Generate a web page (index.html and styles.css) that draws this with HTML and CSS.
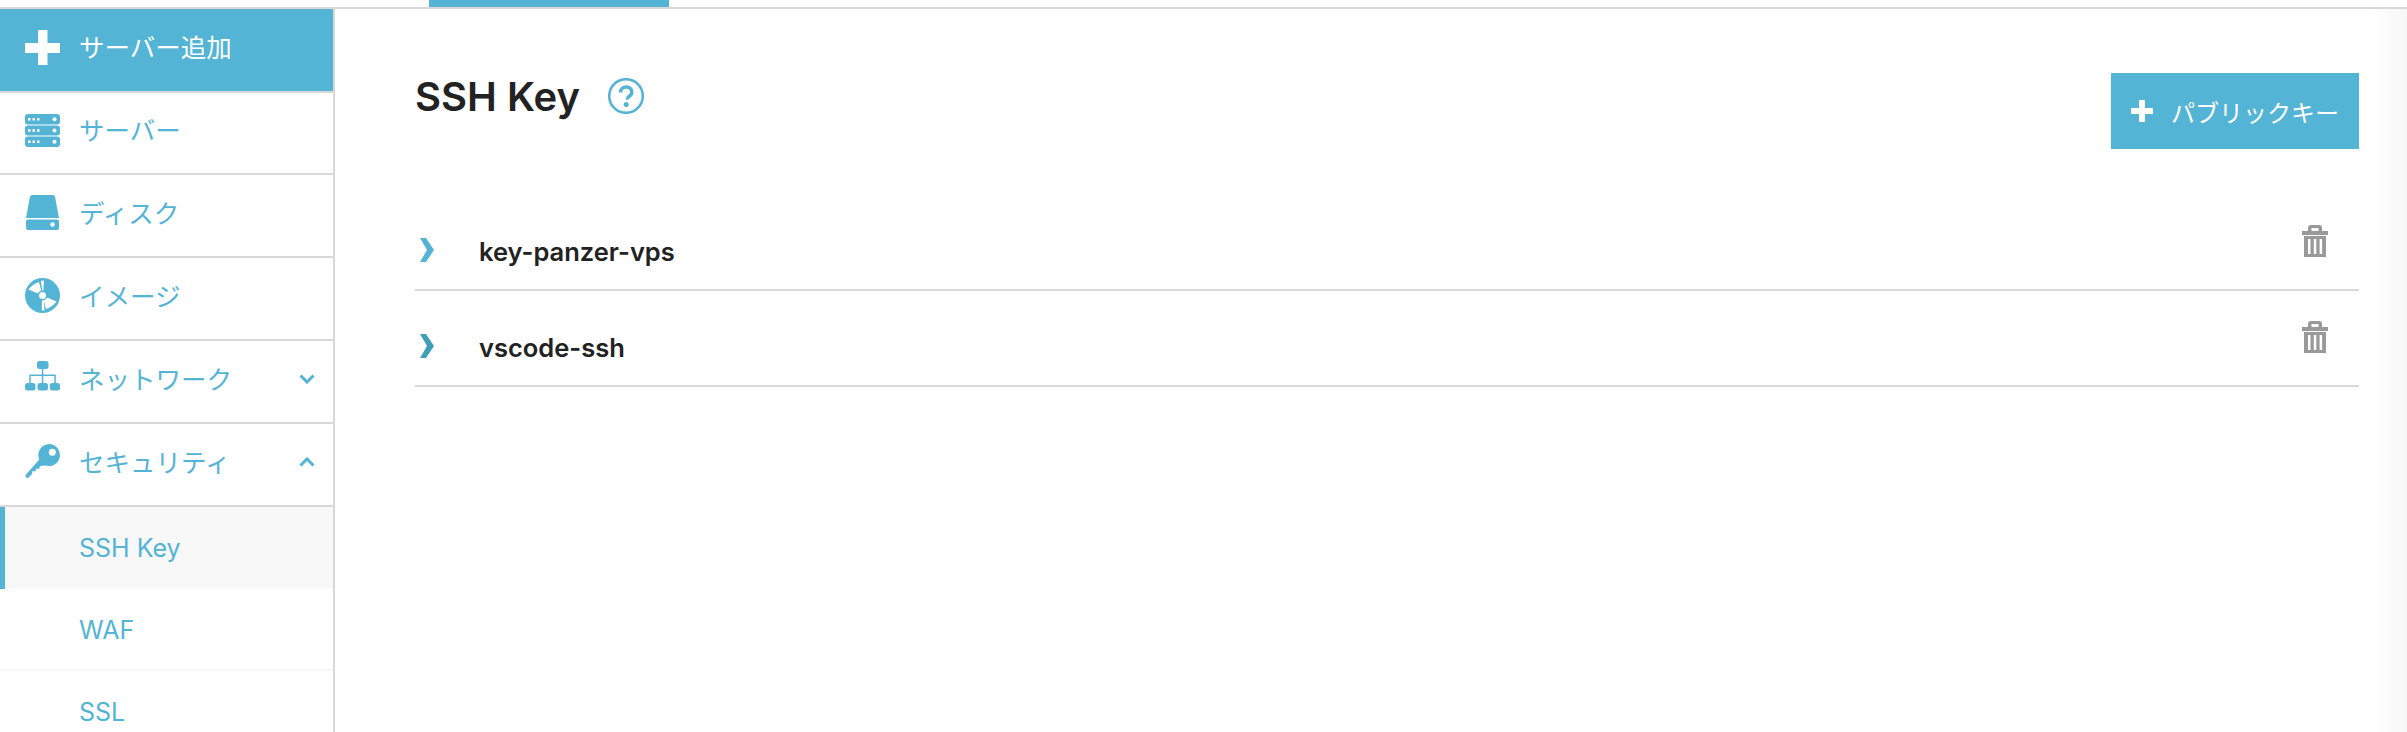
FILE: index.html
```html
<!DOCTYPE html>
<html lang="ja">
<head>
    <meta charset="UTF-8">
    <meta name="viewport" content="width=device-width, initial-scale=1.0">
    <title>SSH Key</title>
    <link rel="stylesheet" href="styles.css">
</head>
<body>

    <div class="topbar"><div class="topbar-tab"></div></div>

    <div class="layout">
        <nav class="sidebar">
            <a class="nav-item nav-add">
                <svg class="nav-icon" viewBox="0 0 35 35"><path d="M13 0h9.500v13H35v10H22.500v12H13V23H0V13h13z" fill="#fff"/></svg>
                <span>サーバー追加</span>
            </a>
            <a class="nav-item nav-server">
                <svg class="nav-icon" viewBox="0 0 35 35">
                    <rect y="1" width="35" height="10.500" rx="3"/>
                    <rect y="12.500" width="35" height="10" rx="3"/>
                    <rect y="23.500" width="35" height="10.500" rx="3"/>
                    <g fill="#fff">
                        <path d="M3 5h2.500v2.500H3zM7.500 5H10v2.500H7.500zM12 5h2.500v2.500H12zM3 16.200h2.500v2.500H3zM7.500 16.200H10v2.500H7.500zM12 16.200h2.500v2.500H12zM3 27.500h2.500V30H3zM7.500 27.500H10V30H7.500zM12 27.500h2.500V30H12z"/>
                        <circle cx="29.500" cy="6.300" r="2"/>
                        <circle cx="29.500" cy="17.500" r="2"/>
                        <circle cx="29.500" cy="28.800" r="2"/>
                    </g>
                </svg>
                <span>サーバー</span>
            </a>
            <a class="nav-item">
                <svg class="nav-icon" viewBox="0 0 35 35">
                    <path d="M7.500 0h20c1.500 0 2.300.8 2.600 2.200L34 23H1L4.900 2.200C5.200.8 6 0 7.500 0z"/>
                    <path d="M3 24.500h29a2 2 0 0 1 2 2V33a2 2 0 0 1-2 2H3a2 2 0 0 1-2-2v-6.500a2 2 0 0 1 2-2z"/>
                    <circle cx="27.500" cy="29.500" r="2.200" fill="#fff"/>
                </svg>
                <span>ディスク</span>
            </a>
            <a class="nav-item">
                <svg class="nav-icon" viewBox="0 0 35 35">
                    <circle cx="17.500" cy="17.500" r="17.500"/>
                    <path d="M17.500 17.500L3.500 11.500C6 8 9.500 5.500 14 4zM15.800 2.800l3.200-.3-1 15zM17.500 17.500L31.500 23.500C29 27 25.500 29.500 21 31zM17 17.500h1.500l1 15-2.700.1z" fill="#fff"/>
                    <circle cx="17.500" cy="17.500" r="5"/>
                    <circle cx="17.500" cy="17.500" r="3.500" fill="#fff"/>
                </svg>
                <span>イメージ</span>
            </a>
            <a class="nav-item">
                <svg class="nav-icon" viewBox="0 0 35 35">
                    <rect x="12" y="0" width="11.500" height="8" rx="2.500"/>
                    <path d="M16.800 8h1.500v5.500h12.500v8.500h-1.500v-7H18.300v7h-1.500v-7H5.800v7H4.300v-8.500h12.500z"/>
                    <rect x="0" y="22" width="10.500" height="7.500" rx="2.500"/>
                    <rect x="12.500" y="22" width="10.500" height="7.500" rx="2.500"/>
                    <rect x="24.800" y="22" width="10.200" height="7.500" rx="2.500"/>
                </svg>
                <span>ネットワーク</span>
                <svg class="nav-caret" viewBox="0 0 16 10"><path d="M1.500 1.500L8 8l6.500-6.500"/></svg>
            </a>
            <a class="nav-item">
                <svg class="nav-icon" viewBox="0 0 35 35">
                    <path d="M24 0a11 11 0 1 1-3 21.600L15 22l-1 3-3-.5-.5 3-3-.5-.5 3-3.500 3.500C1.500 35-.5 32.500 1 30.500L14.300 15.500A11 11 0 0 1 24 0z"/>
                    <circle cx="27.300" cy="8.300" r="3.500" fill="#fff"/>
                </svg>
                <span>セキュリティ</span>
                <svg class="nav-caret" viewBox="0 0 16 10"><path d="M1.500 8.500L8 2l6.500 6.500"/></svg>
            </a>
            <a class="nav-sub nav-sub-active">SSH Key</a>
            <a class="nav-sub">WAF</a>
            <a class="nav-sub">SSL</a>
        </nav>

        <main class="content">
            <div class="content-head">
                <div class="title-row">
                    <h1>SSH Key</h1>
                    <svg class="help-icon" viewBox="0 0 36 36">
                        <circle cx="18" cy="18" r="16.800"/>
                        <path d="M12.500 14.500c0-3.300 2.400-5.500 5.700-5.500 3.200 0 5.600 2 5.600 5 0 2.200-1.200 3.400-2.800 4.500-1.300.9-1.700 1.500-1.700 3"/>
                        <circle class="help-dot" cx="18.200" cy="26.500" r="2.500"/>
                    </svg>
                </div>
                <button class="add-key">
                    <svg class="add-key-plus" viewBox="0 0 22 22"><path d="M8 0h6v8h8v6h-8v8H8v-8H0V8h8z" fill="#fff"/></svg>
                    パブリックキー
                </button>
            </div>

            <ul class="key-list">
                <li class="key-row">
                    <svg class="key-arrow" viewBox="0 0 14 24"><path d="M0 0h6l8 12-8 12H0l7-12z"/></svg>
                    <span class="key-name">key-panzer-vps</span>
                    <svg class="trash" viewBox="0 0 26 32"><path fill-rule="evenodd" d="M6 6V3c0-2 1-3 3-3h8c2 0 3 1 3 3v3h6v4H0V6zm3.500 0h7V3h-7zM2 11h22v21H2zm4 3v15h2.500V14zm5.800 0v15h2.500V14zm5.800 0v15h2.500V14z"/></svg>
                </li>
                <li class="key-row key-row-focus">
                    <svg class="key-arrow" viewBox="0 0 14 24"><path d="M0 0h6l8 12-8 12H0l7-12z"/></svg>
                    <span class="key-name">vscode-ssh</span>
                    <svg class="trash" viewBox="0 0 26 32"><path fill-rule="evenodd" d="M6 6V3c0-2 1-3 3-3h8c2 0 3 1 3 3v3h6v4H0V6zm3.500 0h7V3h-7zM2 11h22v21H2zm4 3v15h2.500V14zm5.800 0v15h2.500V14zm5.800 0v15h2.500V14z"/></svg>
                </li>
            </ul>
        </main>
    </div>

</body>
</html>
```

FILE: styles.css
```css
* {
    box-sizing: border-box;
}
body {
    margin: 0;
    height: 732px;
    overflow: hidden;
    background: #fff;
    font-family: Inter, "Noto Sans CJK JP", sans-serif;
    color: #222;
}
.topbar {
    height: 9px;
    border-bottom: 2px solid #d8d8d8;
    padding-left: 429px;
}
.topbar-tab {
    width: 240px;
    height: 7px;
    background: #54b4d5;
}
.layout {
    display: flex;
    height: 723px;
}
.sidebar {
    width: 335px;
    flex-shrink: 0;
    border-right: 2px solid #d8d8d8;
}
.nav-item {
    display: flex;
    align-items: center;
    gap: 19px;
    height: 83px;
    padding: 0 18px 6px 25px;
    border-bottom: 2px solid #d8d8d8;
    color: #54b4d5;
    font-size: 25.500px;
    font-weight: 400;
}
.nav-item span {
    margin-bottom: 3px;
}
.nav-add {
    height: 84px;
    background: #54b4d5;
    color: #fff;
}
.nav-server {
    height: 82px;
}
.nav-icon {
    width: 35px;
    height: 35px;
    fill: #54b4d5;
    flex-shrink: 0;
}
.nav-caret {
    width: 16px;
    height: 10px;
    margin-left: auto;
    fill: none;
    stroke: #54b4d5;
    stroke-width: 3;
}
.nav-sub {
    display: block;
    height: 82px;
    padding-left: 79px;
    line-height: 82px;
    color: #54b4d5;
    font-size: 25px;
    font-weight: 400;
    border-bottom: 2px solid #f6f6f6;
}
.nav-sub-active {
    background: #f8f8f8;
    border-left: 5px solid #54b4d5;
    border-bottom: 0;
    padding-left: 74px;
}
.content {
    flex: 1;
    padding: 64px 48px 0 80px;
    background: linear-gradient(to right, #fff, #f7f7f7) right top / 37px 100% no-repeat;
}
.content-head {
    display: flex;
    justify-content: space-between;
    align-items: flex-start;
    height: 76px;
}
.title-row {
    display: flex;
    align-items: center;
    gap: 28px;
}
.title-row h1 {
    margin: 0;
    font-size: 40px;
    font-weight: 600;
    line-height: 48px;
}
.help-icon {
    width: 36px;
    height: 36px;
    margin-bottom: 3px;
    fill: none;
    stroke: #54b4d5;
    stroke-width: 2.500;
}
.help-icon path {
    stroke-width: 3.500;
}
.help-dot {
    fill: #54b4d5;
    stroke: none;
}
.add-key {
    display: flex;
    align-items: center;
    gap: 18px;
    width: 248px;
    height: 76px;
    padding: 0 0 0 20px;
    border: none;
    background: #54b4d5;
    color: #fff;
    font-family: inherit;
    font-size: 24px;
    font-weight: 400;
}
.add-key-plus {
    width: 22px;
    height: 22px;
}
.key-list {
    list-style: none;
    margin: 46px 0 0;
    padding: 0;
}
.key-row {
    display: flex;
    align-items: center;
    height: 96px;
    padding: 16px 31px 0 5px;
    border-bottom: 2px solid #d8d8d8;
}
.key-arrow {
    width: 14px;
    height: 24px;
    fill: #54b4d5;
}
.key-row-focus .key-arrow {
    fill: #3f9fb8;
}
.key-name {
    margin: 2px 0 0 45px;
    font-size: 25.500px;
    font-weight: 600;
}
.trash {
    width: 26px;
    height: 32px;
    margin-left: auto;
    margin-bottom: 18px;
    fill: #999;
}
```
